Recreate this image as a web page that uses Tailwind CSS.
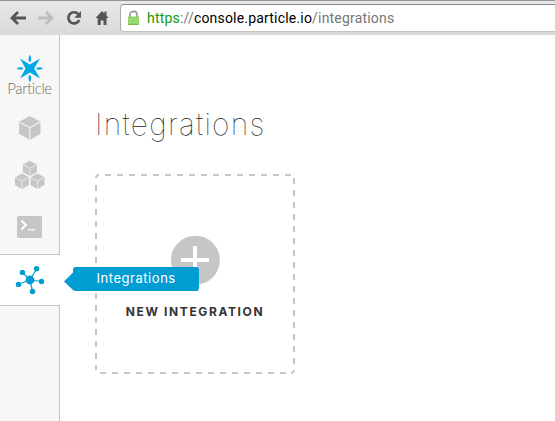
<!DOCTYPE html>
<html lang="en">
<head>
<meta charset="utf-8">
<title>Integrations</title>
<script src="https://cdn.jsdelivr.net/npm/@tailwindcss/browser@4"></script>
</head>
<body class="flex h-[421px] w-[555px] flex-col overflow-hidden bg-white font-['Inter',sans-serif]">
<header class="flex h-[35px] shrink-0 items-start border-t border-[#969497] bg-linear-to-b from-[#e9e7e9] to-[#dadada]">
  <nav class="flex h-[34px] w-[120px] shrink-0">
    <svg class="h-[34px] w-[120px]" viewBox="0 1 120 34" fill="none" stroke="#555" stroke-width="2.8">
      <path d="M26 18H12M18 12L12 18L18 24"/>
      <path stroke="#bdbdbd" d="M38 18H52M46 12L52 18L46 24"/>
      <path stroke-width="2.7" d="M78.3 14.2A5.6 5.6 0 1 0 79.2 20"/>
      <path fill="#555" stroke="none" d="M81 11V17.7H74.3Z"/>
      <path fill="#555" stroke="none" d="M102 11L95.5 18H97.7V25H100.7V20.5H103.5V25H106.5V18H108.7L106.5 15.6V11.5H104.5V13.5Z"/>
    </svg>
  </nav>
  <div class="mt-[3px] flex h-[28px] flex-1 items-center rounded-l-[4px] border border-r-0 border-[#aaa] border-t-[#8c8a8d] border-b-[#c5c5c5] bg-white pl-[6px]">
    <svg class="h-4 w-[14px] shrink-0" viewBox="0 0 14 16">
      <path d="M3 8V4.5C3 .2 10 .2 10 4.5V8" fill="none" stroke="#9a9a9a" stroke-width="1.7"/>
      <rect x="1" y="6.5" width="11" height="8.5" rx=".8" fill="#91d467"/>
      <path d="M1.5 9.3H11.5M1.5 12H11.5" stroke="#a8e080"/>
      <path d="M1.5 14.5H11.5" stroke="#78bd50"/>
    </svg>
    <span class="ml-[6px] font-[Roboto,sans-serif] text-[14px] leading-5 tracking-[0.19px] whitespace-nowrap text-[#777]"><span class="text-[#109a10]">https</span>://<span class="text-black">console.particle.io</span>/integrations</span>
  </div>
</header>
<div class="flex min-h-0 flex-1">
  <aside class="flex w-[60px] shrink-0 flex-col">
    <div class="flex h-[219px] shrink-0 flex-col border-r border-[#c4c4c4] bg-[#f7f7f7]">
      <a class="flex h-[66px] flex-col items-center pt-[20px]">
        <svg class="h-[27px] w-[27px] shrink-0" viewBox="0 0 27 27" fill="#00a9e8">
          <path d="M4 3.5L13.8 9.5L24 3.5L18.2 13.5L24 23.5L13.8 17.5L4 23.5L9.5 13.5Z"/>
          <path d="M13.1 .5H14.6L15.2 5L13.8 7.5L12.4 5ZM13.1 26.5H14.6L15.2 22L13.8 19.5L12.4 22ZM1.2 12.8V14.2L5.5 14.8L7.5 13.5L5.5 12.2ZM26.4 12.8V14.2L22.1 14.8L20.1 13.5L22.1 12.2Z"/>
        </svg>
        <span class="mt-[-2px] font-['Lato',sans-serif] text-[15px] leading-[17px] font-light tracking-[-0.4px] text-[#707070]">Particle</span>
      </a>
      <svg class="h-[153px] w-[59px]" viewBox="0 101 59 153">
        <defs><g id="cube">
          <path d="M0-12L10.7-6.3V5.8L0 12L-10.7 5.8V-6.3Z" fill="#c6c6c6"/>
          <path d="M-10-5.7L0-.3L10-5.7M0 0V11.5" fill="none" stroke="#f7f7f7" stroke-width="1.1"/>
        </g></defs>
        <use href="#cube" x="29.8" y="128"/>
        <g transform="translate(29.8 168.5) scale(.65)"><use href="#cube"/></g>
        <g transform="translate(22 181.3) scale(.65)"><use href="#cube"/></g>
        <g transform="translate(37.5 181.3) scale(.65)"><use href="#cube"/></g>
        <rect x="17" y="216" width="25" height="22" rx="1.5" fill="#c6c6c6"/>
        <path d="M21.3 220.5L26 225L21.3 229.5" fill="none" stroke="white" stroke-width="2"/>
        <path d="M28 229.8H35" stroke="white" stroke-width="1.3"/>
      </svg>
    </div>
    <a class="relative flex h-[52px] shrink-0 border-y border-[#c4c4c4] bg-white">
      <svg class="h-[50px] w-[60px]" viewBox="0 255 60 50" fill="#009dd3" stroke="#009dd3">
        <path d="M30 280L36.5 269M30 280L22.5 272.5M30 280L18.5 284.3M30 280L32.5 291.5M30 280L41.5 281.5" stroke-width="1.2"/>
        <g stroke="none"><circle cx="30" cy="280" r="4.4"/><circle cx="36.6" cy="268.7" r="2.7"/><circle cx="22.4" cy="272.4" r="2.7"/><circle cx="18.5" cy="284.4" r="2.7"/><circle cx="32.5" cy="291.5" r="2.7"/><circle cx="41.5" cy="281.5" r="2.7"/></g>
      </svg>
      <div class="absolute top-[12px] left-[64px] z-10 flex h-6 w-[135px]">
        <svg class="h-6 w-[10px] shrink-0" viewBox="0 0 10 24"><path d="M0 14.5L9 5.5V4Q9 2 10 1V24L9 23Z" fill="#009dd3"/></svg>
        <span class="-ml-px flex h-6 w-[126px] items-center rounded-[3px] bg-[#009dd3] pl-[23.5px] text-[13px] tracking-[0.54px] text-white">Integrations</span>
      </div>
    </a>
    <div class="flex-1 border-r border-[#c4c4c4] bg-[#f7f7f7]"></div>
  </aside>
  <main class="flex flex-col pt-[69px] pl-[35px]">
    <h1 class="h-10 text-[30px] leading-10 font-thin tracking-[1.25px] whitespace-nowrap text-[#222]">Integrations</h1>
    <section class="relative mt-[30px] flex h-[200px] w-[200px] flex-col items-center pt-[61px]">
      <svg class="absolute inset-0 h-[200px] w-[200px]" viewBox="0 0 200 200" fill="none" stroke="#c6c6c6" stroke-width="2">
        <path d="M10 1H196" stroke-dasharray="6 6"/>
        <path d="M199 4V196" stroke-dasharray="6 6"/>
        <path d="M5 199H196" stroke-dasharray="6 6"/>
        <path d="M1 11V196" stroke-dasharray="6 6"/>
        <path d="M1 4Q1 1 4 1M199 196Q199 199 196 199"/>
      </svg>
      <svg class="h-[50px] w-[50px] shrink-0" viewBox="0 0 50 50"><circle cx="25.4" cy="25.2" r="24.5" fill="#c6c6c6"/><path d="M11 25H39M25 11V39" stroke="white" stroke-width="4"/></svg>
      <span class="mt-[17px] text-[12px] leading-5 font-bold tracking-[1.62px] whitespace-nowrap text-[#333]">NEW INTEGRATION</span>
    </section>
  </main>
</div>
</body>
</html>
